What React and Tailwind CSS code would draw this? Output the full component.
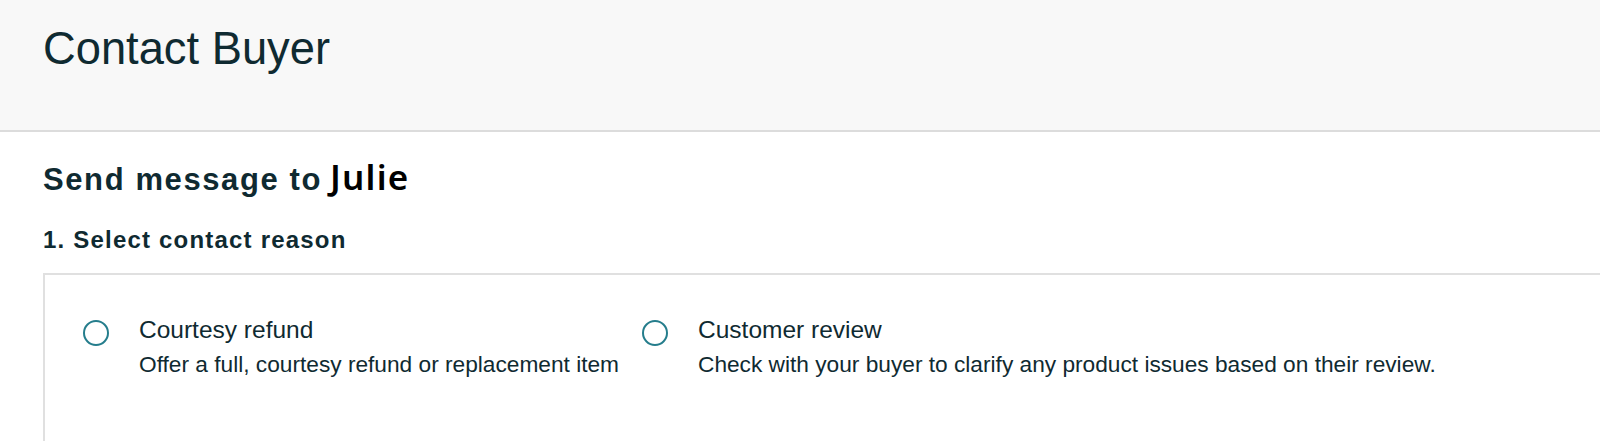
import React from "react";

const reasons = [
  {
    title: "Courtesy refund",
    desc: "Offer a full, courtesy refund or replacement item",
  },
  {
    title: "Customer review",
    desc: "Check with your buyer to clarify any product issues based on their review.",
  },
];

function Radio() {
  return <span className="mt-[5px] block w-[26px] h-[26px] shrink-0 rounded-full border-2 border-[#257d8c] bg-white" />;
}

export default function App() {
  return (
    <div className="w-[1600px] h-[441px] overflow-hidden bg-white text-[#0f2a31] font-['Liberation_Sans',Arial,sans-serif]">
      {/* header */}
      <div className="h-[132px] bg-[#f8f8f8] border-b-2 border-[#dcdcdc] pl-[43px] pt-[26px]">
        <h1 className="text-[45.3px] leading-none font-normal">Contact Buyer</h1>
      </div>

      <div className="pl-[43px]">
        <h2 className="mt-[27px] h-[34px] text-[31px] leading-none font-bold tracking-[1.6px] flex items-baseline">
          Send message to
          <span className="ml-[8px] text-black text-[35px] font-['Noto_Sans',sans-serif] font-semibold tracking-[1.2px]">Julie</span>
        </h2>

        <h3 className="mt-[35px] text-[24px] leading-none font-bold tracking-[1.2px]">1. Select contact reason</h3>

        <div className="mt-[21px] w-[1600px] h-[200px] border-2 border-[#e0e0e0] pt-[40px] pl-[38px] flex">
          {reasons.map((r) => (
            <div key={r.title} className="w-[559px] flex gap-[30px]">
              <Radio />
              <div>
                <p className="text-[24.5px] leading-[30px]">{r.title}</p>
                <p className="mt-[4px] text-[22.7px] leading-[30px] whitespace-nowrap">{r.desc}</p>
              </div>
            </div>
          ))}
        </div>
      </div>
    </div>
  );
}
